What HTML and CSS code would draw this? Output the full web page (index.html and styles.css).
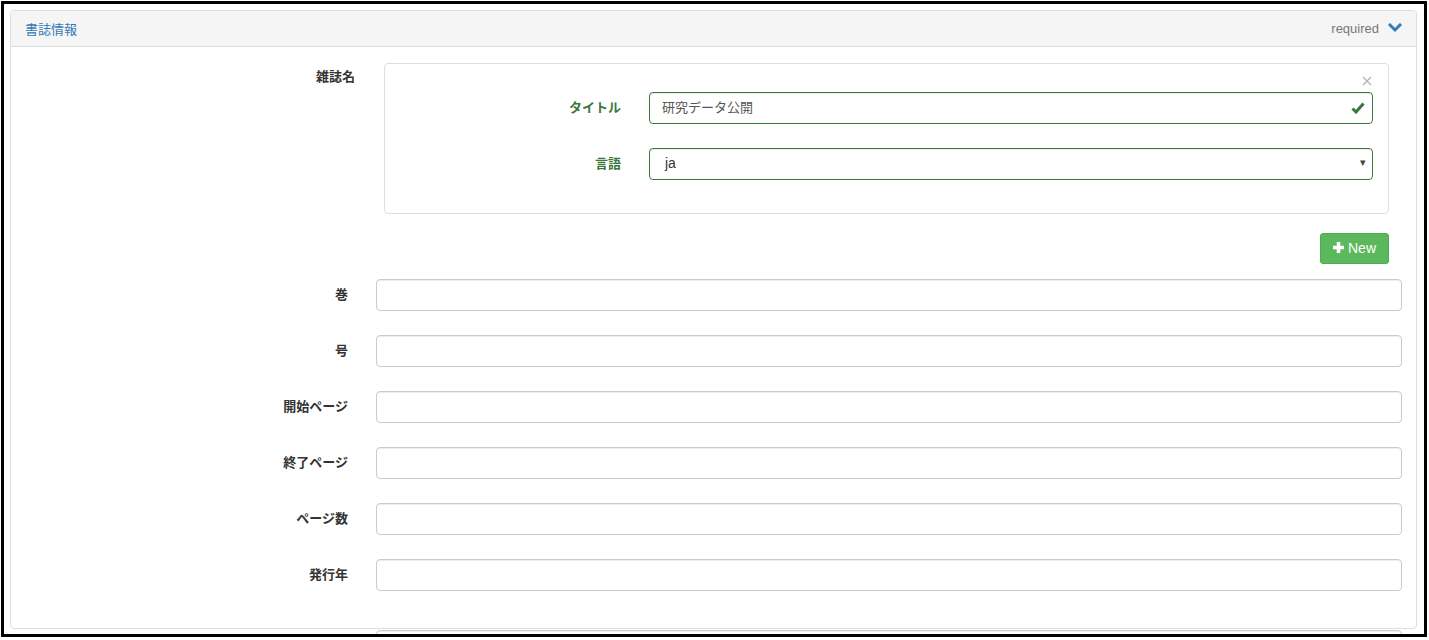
FILE: index.html
```html
<!DOCTYPE html>
<html lang="ja">
<head>
<meta charset="utf-8">
<title>書誌情報</title>
<link rel="stylesheet" href="styles.css">
</head>
<body>
<div class="frame">
  <div class="panel">
    <div class="panel-heading">
      <span class="panel-title">書誌情報</span>
      <span class="req">required
        <svg class="chev" width="14" height="10" viewBox="0 0 14 10"><polyline points="2,2 7,7 12,2" fill="none" stroke="#337ab7" stroke-width="3" stroke-linecap="square"/></svg>
      </span>
    </div>
    <div class="panel-body">
      <div class="row-top">
        <div class="lbl lbl-top">雑誌名</div>
        <div class="sub">
          <div class="sub-box">
            <span class="close"><svg width="10" height="10" viewBox="0 0 10 10"><path d="M1 1 L9 9 M9 1 L1 9" stroke="#b3b3b3" stroke-width="1.4"/></svg></span>
            <div class="srow">
              <div class="slbl">タイトル</div>
              <div class="input ok">研究データ公開
                <svg class="check" width="14" height="12" viewBox="0 0 14 12"><polyline points="1.5,6.5 5,10 12.5,1.5" fill="none" stroke="#3c763d" stroke-width="3"/></svg>
              </div>
            </div>
            <div class="srow">
              <div class="slbl">言語</div>
              <div class="input ok select">ja<span class="caret">▾</span></div>
            </div>
          </div>
          <div class="btn-row">
            <span class="btn-new"><svg width="13" height="13" viewBox="0 0 13 13"><path d="M6.5 1 V12 M1 6.5 H12" stroke="#fff" stroke-width="3.6"/></svg>New</span>
          </div>
        </div>
      </div>
      <div class="frow"><div class="lbl">巻</div><div class="input"></div></div>
      <div class="frow"><div class="lbl">号</div><div class="input"></div></div>
      <div class="frow"><div class="lbl">開始ページ</div><div class="input"></div></div>
      <div class="frow"><div class="lbl">終了ページ</div><div class="input"></div></div>
      <div class="frow"><div class="lbl">ページ数</div><div class="input"></div></div>
      <div class="frow"><div class="lbl">発行年</div><div class="input"></div></div>
    </div>
  </div>
  <div class="frow next"><div class="lbl"></div><div class="input"></div></div>
</div>
</body>
</html>
```

FILE: styles.css
```css
* { box-sizing: border-box; }
html, body { margin: 0; padding: 0; background: #fff; }
body {
  font-family: "Liberation Sans", "Noto Sans CJK JP", sans-serif;
  font-size: 13px;
  color: #333;
}
.frame {
  margin: 1px;
  width: 1426px;
  height: 636px;
  border: 3px solid #000;
  padding: 6px 7px 0 6px;
  overflow: hidden;
  background: #fff;
}
.panel {
  border: 1px solid #ddd;
  border-radius: 4px;
  height: 619px;
  overflow: hidden;
}
.panel-heading {
  height: 36px;
  background: #f5f5f5;
  border-bottom: 1px solid #ddd;
  display: flex;
  align-items: center;
  justify-content: space-between;
  padding: 0 14px 1px 14px;
}
.panel-title {
  color: #337ab7;
  font-family: "Noto Sans CJK JP", sans-serif;
  font-size: 13px;
}
.req {
  color: #777;
  font-size: 13px;
  display: flex;
  align-items: center;
  gap: 9px;
}
.chev { display: block; }
.panel-body { padding: 16px 0 0 0; }
.lbl {
  text-align: right;
  font-weight: bold;
  font-family: "Noto Sans CJK JP", sans-serif;
  font-size: 13px;
  color: #333;
}
.row-top {
  display: grid;
  grid-template-columns: 344px 1005px;
  column-gap: 29px;
}
.lbl-top { padding-top: 3px; line-height: 20px; }
.sub-box {
  position: relative;
  border: 1px solid #ddd;
  border-radius: 4px;
  height: 151px;
  padding: 28px 15px 0 0;
  display: flex;
  flex-direction: column;
  gap: 24px;
}
.close {
  position: absolute;
  top: 12px;
  right: 16px;
  line-height: 0;
}
.srow {
  display: grid;
  grid-template-columns: 236px 1fr;
  column-gap: 28px;
  align-items: center;
}
.slbl {
  text-align: right;
  font-weight: bold;
  color: #3c763d;
  font-family: "Noto Sans CJK JP", sans-serif;
  font-size: 13px;
  padding-bottom: 4px;
}
.input {
  height: 32px;
  border: 1px solid #ccc;
  border-radius: 4px;
  background: #fff;
  padding: 0 12px 3px;
  display: flex;
  align-items: center;
  color: #555;
  font-family: "Noto Sans CJK JP", sans-serif;
  font-size: 13px;
  box-shadow: inset 0 1px 1px rgba(0,0,0,0.075);
  position: relative;
}
.input.ok { border-color: #3c763d; }
.check { position: absolute; right: 7px; top: 9px; }
.select { padding-left: 15px; font-family: "Liberation Sans", sans-serif; font-size: 14px; color: #333; }
.caret {
  position: absolute;
  right: 6px;
  top: 7px;
  font-size: 11px;
  color: #444;
}
.btn-row {
  display: flex;
  justify-content: flex-end;
  margin-top: 19px;
}
.btn-new {
  display: inline-flex;
  align-items: center;
  gap: 3px;
  height: 31px;
  width: 69px;
  padding: 0 0 2px 11px;
  background: #5cb85c;
  border: 1px solid #4cae4c;
  border-radius: 3px;
  color: #fff;
  font-size: 14px;
  font-family: "Liberation Sans", sans-serif;
}
.btn-new svg { display: block; }
.frow {
  display: grid;
  grid-template-columns: 337px 1026px;
  column-gap: 28px;
  align-items: center;
  margin-top: 24px;
}
.row-top + .frow { margin-top: 15px; }
.frow .lbl { padding-bottom: 4px; }
.next { margin-top: 1px; padding-left: 1px; }
```
